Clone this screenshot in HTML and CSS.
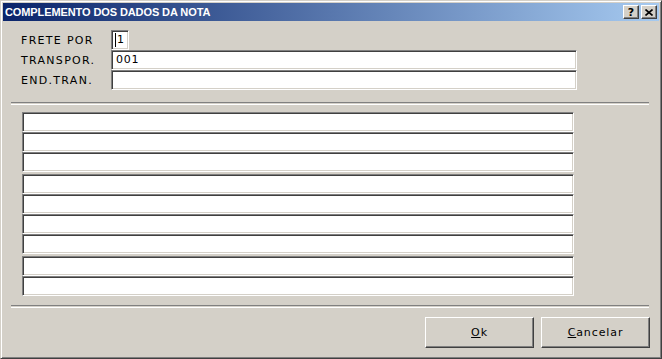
FILE: index.html
```html
<!DOCTYPE html>
<html lang="pt">
<head>
  <meta charset="UTF-8" />
  <title>Complemento dos Dados da Nota</title>
  <link rel="stylesheet" href="styles.css">
</head>
<body>
<div class="window">
  <div class="titlebar">
    <span class="title">COMPLEMENTO DOS DADOS DA NOTA</span>
    <div class="title-buttons">
      <span class="tbtn help">?</span>
      <span class="tbtn">
        <svg width="8" height="7" viewBox="0 0 8 7"><path d="M0.5 0.5 L7.5 6.5 M7.5 0.5 L0.5 6.5" stroke="#000" stroke-width="1.6"/></svg>
      </span>
    </div>
  </div>

  <div class="content">
    <div class="fields">
      <div class="field-row">
        <label>FRETE POR</label>
        <div class="edit small"><span class="caret"></span>1</div>
      </div>
      <div class="field-row">
        <label>TRANSPOR.</label>
        <div class="edit wide">001</div>
      </div>
      <div class="field-row">
        <label>END.TRAN.</label>
        <div class="edit wide"></div>
      </div>
    </div>

    <div class="sep"></div>

    <div class="memo">
      <div class="group">
        <div class="edit line"></div>
        <div class="edit line"></div>
        <div class="edit line"></div>
      </div>
      <div class="group">
        <div class="edit line"></div>
        <div class="edit line"></div>
        <div class="edit line"></div>
        <div class="edit line"></div>
      </div>
      <div class="group">
        <div class="edit line"></div>
        <div class="edit line"></div>
      </div>
    </div>

    <div class="sep bottom"></div>

    <div class="actions">
      <button class="btn"><u>O</u>k</button>
      <button class="btn"><u>C</u>ancelar</button>
    </div>
  </div>
</div>
</body>
</html>
```

FILE: styles.css
```css
body {
  margin: 0;
  background-color: #d4d0c8;
  font-family: "DejaVu Sans", sans-serif;
  font-size: 11px;
  color: #000;
}

.window {
  width: 662px;
  height: 359px;
  box-sizing: border-box;
  background-color: #d4d0c8;
  border: 1px solid;
  border-color: #d4d0c8 #404040 #404040 #d4d0c8;
  box-shadow: inset 1px 1px #fff, inset -1px -1px #808080;
  padding: 2px;
  overflow: hidden;
}

.titlebar {
  height: 18px;
  display: flex;
  align-items: center;
  justify-content: space-between;
  background: linear-gradient(to right, #0a246a, #a6caf0);
  padding: 0 2px 0 2px;
}

.title {
  color: #fff;
  font-family: "Liberation Sans", sans-serif;
  font-weight: bold;
  font-size: 11px;
  letter-spacing: -0.1px;
}

.title-buttons {
  display: flex;
  gap: 2px;
}

.tbtn {
  width: 16px;
  height: 14px;
  box-sizing: border-box;
  background-color: #d4d0c8;
  border: 1px solid;
  border-color: #fff #404040 #404040 #fff;
  box-shadow: inset -1px -1px #808080;
  display: flex;
  align-items: center;
  justify-content: center;
  font-weight: bold;
  font-size: 11px;
  line-height: 1;
}

.content {
  padding-top: 9px;
}

.fields {
  padding-left: 18px;
}

.field-row {
  display: flex;
  align-items: center;
  height: 20px;
}

.field-row label {
  width: 90px;
  letter-spacing: 1.3px;
}

.edit {
  height: 20px;
  box-sizing: border-box;
  background-color: #fff;
  border: 1px solid;
  border-color: #808080 #fff #fff #808080;
  box-shadow: inset 1px 1px #404040, inset -1px -1px #d4d0c8;
  padding: 2px 0 0 4px;
  letter-spacing: 0.7px;
}

.edit.small {
  width: 18px;
  padding-left: 3px;
  display: flex;
  align-items: flex-start;
}

.caret {
  display: inline-block;
  width: 1px;
  height: 14px;
  background-color: #000;
  margin-right: 1px;
}

.edit.wide {
  width: 466px;
}

.sep {
  height: 1px;
  border-top: 1px solid #808080;
  border-bottom: 1px solid #fff;
  margin: 12px 10px 0 8px;
}

.sep.bottom {
  margin-top: 9px;
}

.memo {
  margin: 7px 0 0 19px;
  width: 552px;
  display: flex;
  flex-direction: column;
  gap: 2px;
}

.group .edit.line {
  width: 552px;
}

.actions {
  display: flex;
  justify-content: flex-end;
  gap: 7px;
  margin-top: 9px;
  padding-right: 9px;
}

.btn {
  width: 109px;
  height: 31px;
  background-color: #d4d0c8;
  border: 1px solid;
  border-color: #fff #404040 #404040 #fff;
  box-shadow: inset -1px -1px #808080;
  font-family: "DejaVu Sans", sans-serif;
  font-size: 11px;
  letter-spacing: 0.9px;
  color: #000;
  padding: 0;
}
```
